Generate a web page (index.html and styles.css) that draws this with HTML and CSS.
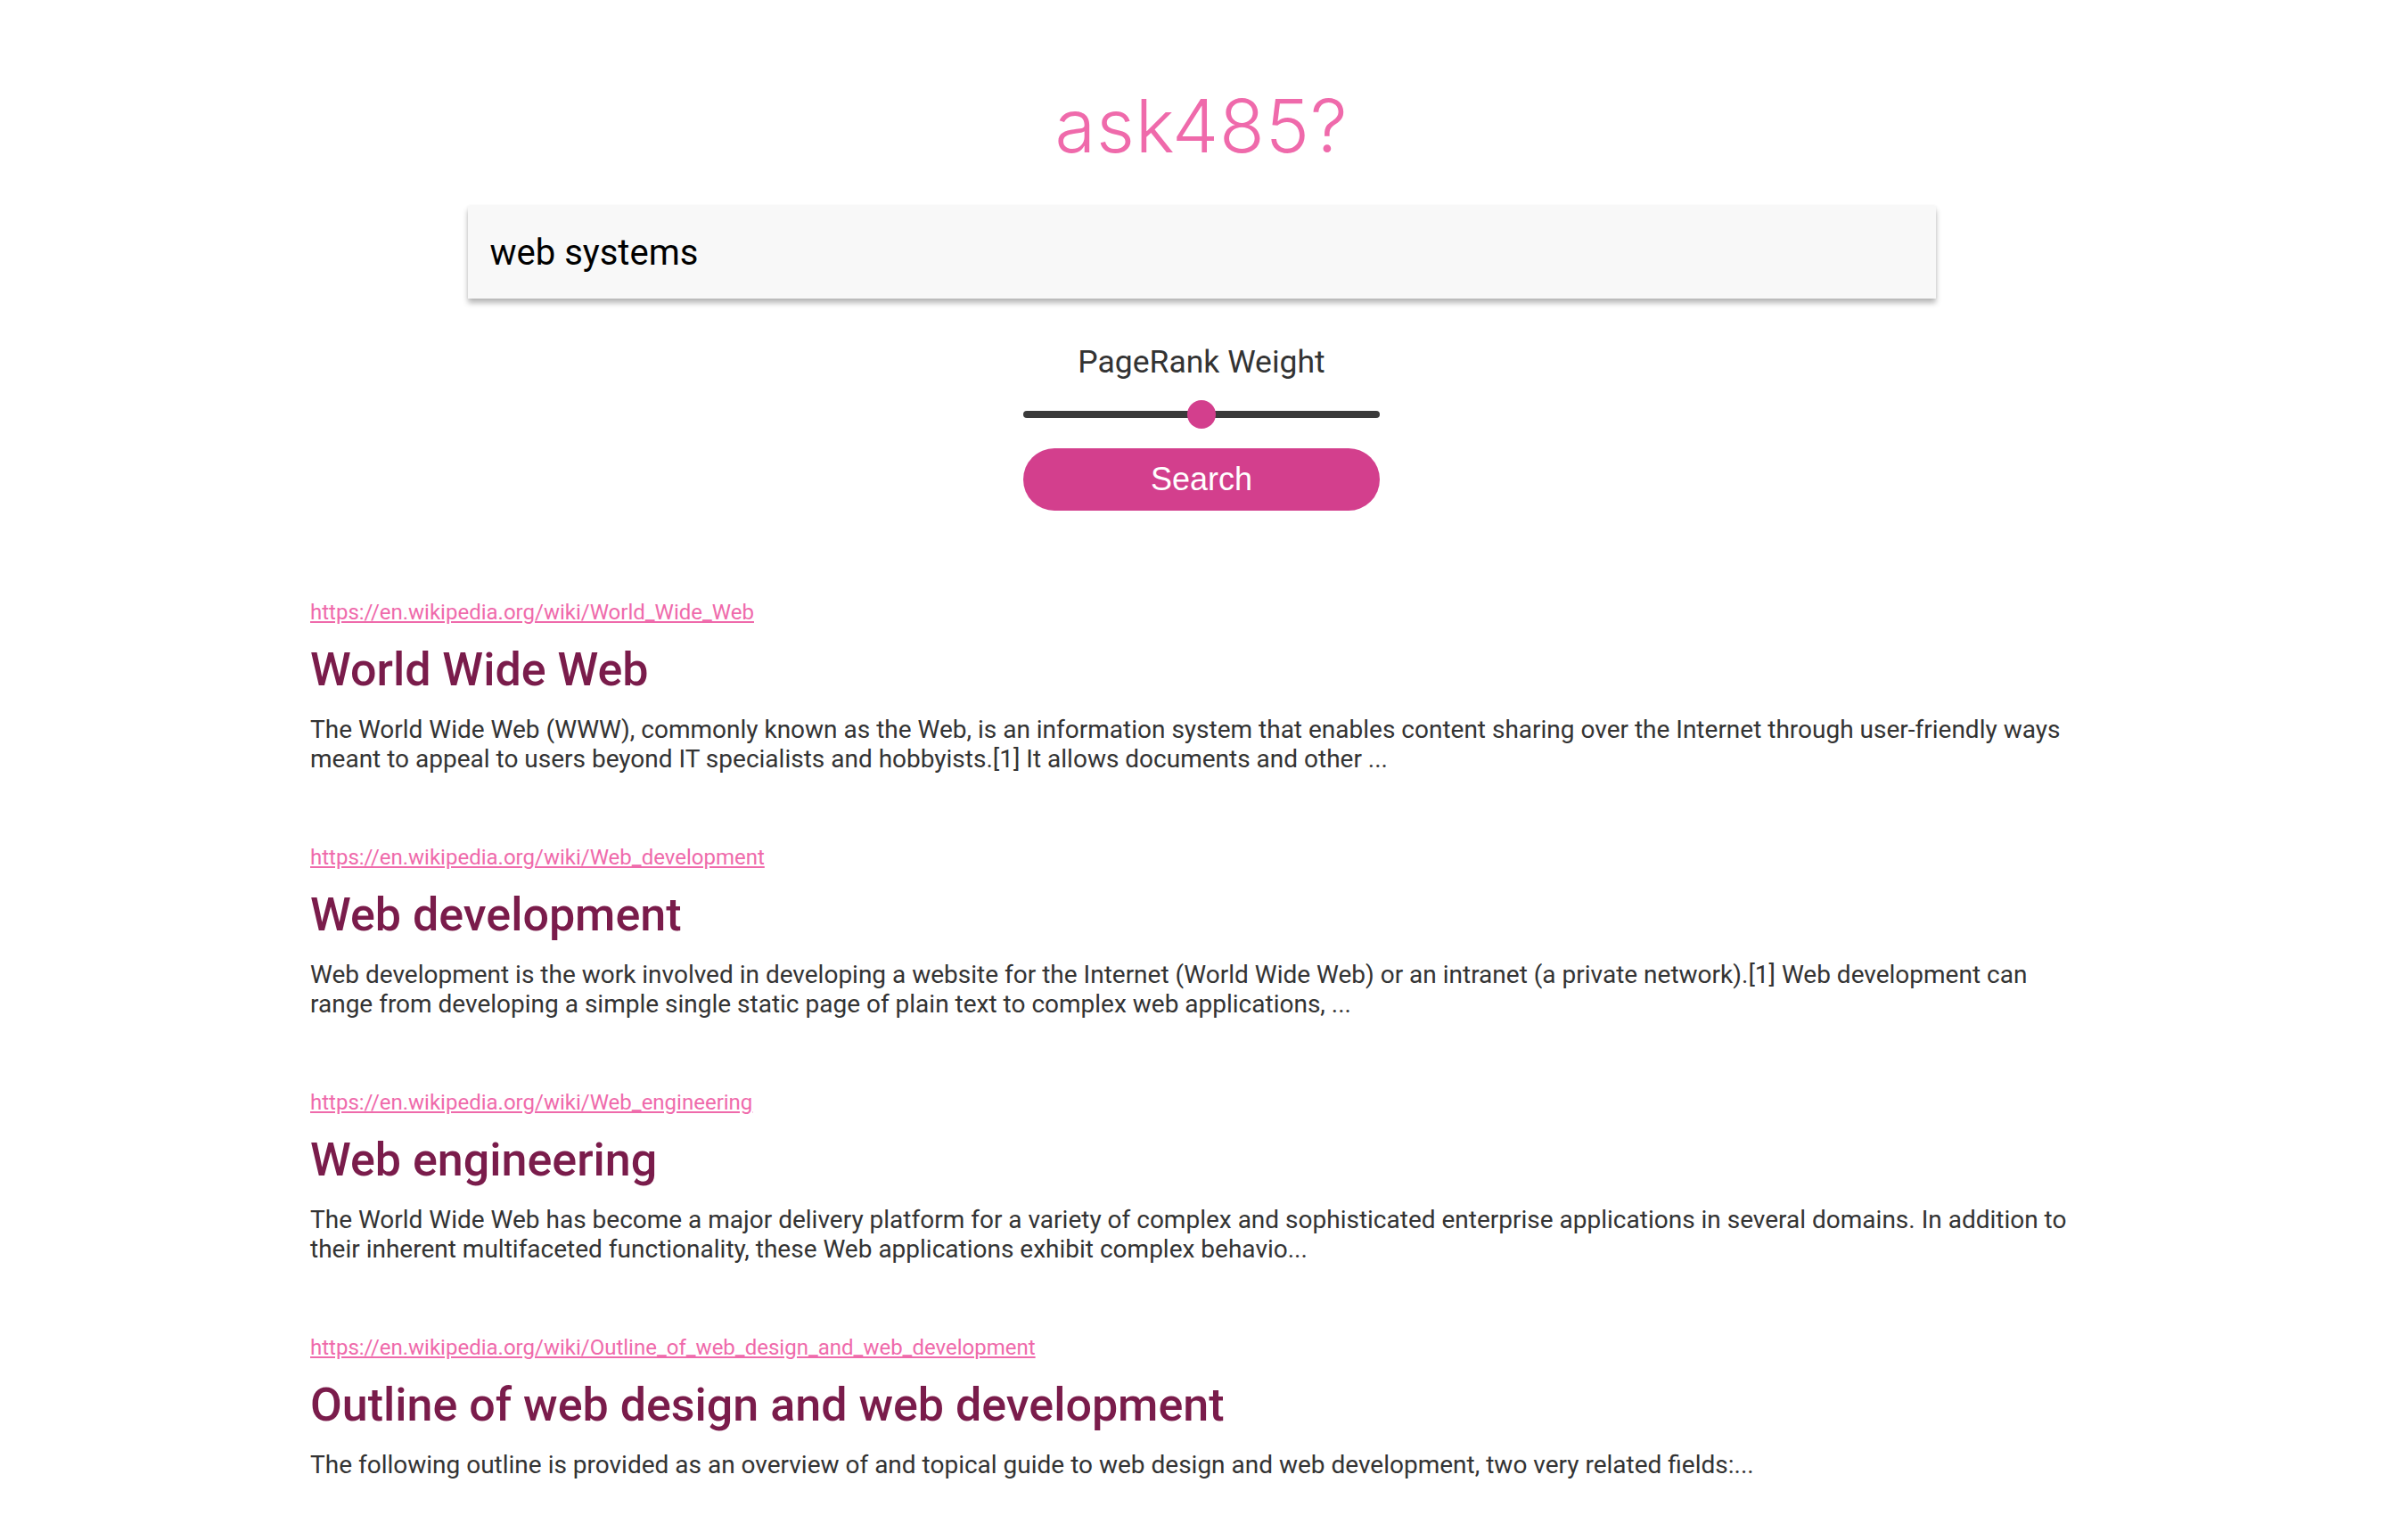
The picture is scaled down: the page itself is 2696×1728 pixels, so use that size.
FILE: index.html
```html
<!DOCTYPE html>
<html lang="en">
<head>
<meta charset="utf-8">
<title>ask485?</title>
<link rel="stylesheet" href="styles.css">
</head>
<body>
<header class="top">
  <h1 class="logo">ask485?</h1>
  <form class="search-form">
    <input class="query" type="text" value="web systems">
    <label class="weight-label">PageRank Weight</label>
    <input class="weight" type="range" min="0" max="100" value="50">
    <button class="search-btn" type="button">Search</button>
  </form>
</header>
<main class="results">
  <article class="result">
    <a class="url" href="#">https://en.wikipedia.org/wiki/World_Wide_Web</a>
    <h2 class="title">World Wide Web</h2>
    <p class="snippet">The World Wide Web (WWW), commonly known as the Web, is an information system that enables content sharing over the Internet through user-friendly ways meant to appeal to users beyond IT specialists and hobbyists.[1] It allows documents and other ...</p>
  </article>
  <article class="result">
    <a class="url" href="#">https://en.wikipedia.org/wiki/Web_development</a>
    <h2 class="title">Web development</h2>
    <p class="snippet">Web development is the work involved in developing a website for the Internet (World Wide Web) or an intranet (a private network).[1] Web development can range from developing a simple single static page of plain text to complex web applications, ...</p>
  </article>
  <article class="result">
    <a class="url" href="#">https://en.wikipedia.org/wiki/Web_engineering</a>
    <h2 class="title">Web engineering</h2>
    <p class="snippet">The World Wide Web has become a major delivery platform for a variety of complex and sophisticated enterprise applications in several domains. In addition to their inherent multifaceted functionality, these Web applications exhibit complex behavio...</p>
  </article>
  <article class="result">
    <a class="url" href="#">https://en.wikipedia.org/wiki/Outline_of_web_design_and_web_development</a>
    <h2 class="title">Outline of web design and web development</h2>
    <p class="snippet">The following outline is provided as an overview of and topical guide to web design and web development, two very related fields:...</p>
  </article>
</main>
</body>
</html>
```

FILE: styles.css
```css
html, body {
  margin: 0;
  padding: 0;
  background: #ffffff;
}

body {
  font-family: Roboto, "Noto Sans", sans-serif;
  color: #333333;
}

.top {
  display: flex;
  flex-direction: column;
  align-items: center;
  padding-top: 91px;
}

.logo {
  margin: 0;
  font-family: Inter, "Noto Sans", sans-serif;
  font-weight: 300;
  font-size: 83px;
  line-height: 100px;
  color: #ef6aab;
  letter-spacing: 1px;
}

.search-form {
  display: flex;
  flex-direction: column;
  align-items: center;
  margin-top: 40px;
}

.query {
  box-sizing: border-box;
  width: 1647px;
  height: 104px;
  margin: 0;
  padding: 0 25px;
  border: none;
  outline: none;
  background: #f8f8f8;
  box-shadow: 0 5px 6px rgba(0, 0, 0, 0.28), 0 0 3px rgba(0, 0, 0, 0.06);
  font-family: Roboto, "Noto Sans", sans-serif;
  font-size: 40px;
  color: #000000;
}

.weight-label {
  display: block;
  margin-top: 50px;
  font-size: 35.5px;
  line-height: normal;
  color: #333333;
}

.weight {
  -webkit-appearance: none;
  appearance: none;
  width: 400px;
  height: 32px;
  margin: 22px 0 0 0;
  padding: 0;
  background: transparent;
}

.weight::-webkit-slider-runnable-track {
  height: 8px;
  border-radius: 4px;
  background: #3a3a3a;
}

.weight::-webkit-slider-thumb {
  -webkit-appearance: none;
  appearance: none;
  width: 32px;
  height: 32px;
  margin-top: -12px;
  border: none;
  border-radius: 50%;
  background: #d33f8d;
}

.search-btn {
  width: 400px;
  height: 70px;
  margin-top: 22px;
  padding: 0;
  border: none;
  border-radius: 35px;
  background: #d33f8d;
  color: #ffffff;
  font-family: "Liberation Sans", Arial, sans-serif;
  font-size: 36px;
}

.results {
  width: 2000px;
  margin: 100px auto 0;
  padding-bottom: 60px;
}

.result {
  display: flex;
  flex-direction: column;
  align-items: flex-start;
  margin-bottom: 80px;
}

.url {
  display: block;
  font-size: 24px;
  line-height: normal;
  color: #ef6aab;
  text-decoration: underline;
}

.title {
  margin: 20px 0 0 0;
  font-size: 52px;
  font-weight: 500;
  line-height: normal;
  color: #7a1c4b;
}

.snippet {
  margin: 20px 10px 0 0;
  font-size: 28px;
  line-height: normal;
  color: #333333;
}
```
